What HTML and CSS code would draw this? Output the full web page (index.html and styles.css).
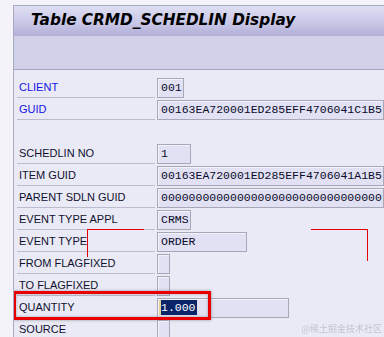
FILE: index.html
```html
<!DOCTYPE html>
<html lang="en">
<head>
    <meta charset="UTF-8">
    <meta name="viewport" content="width=device-width, initial-scale=1.0">
    <link rel="stylesheet" href="styles.css">
    <title>Table CRMD_SCHEDLIN Display</title>
</head>
<body>
    <div class="frame">
        <div class="title-bar">
            <h1>Table CRMD_SCHEDLIN Display</h1>
        </div>
        <div class="toolbar"></div>
        <div class="content">
            <div class="row key">
                <span class="label">CLIENT</span>
                <span class="field w-client">001</span>
            </div>
            <div class="row key">
                <span class="label">GUID</span>
                <span class="field w-wide">00163EA720001ED285EFF4706041C1B5</span>
            </div>
            <div class="row blank"></div>
            <div class="row">
                <span class="label">SCHEDLIN NO</span>
                <span class="field w-short">1</span>
            </div>
            <div class="row">
                <span class="label">ITEM GUID</span>
                <span class="field w-wide">00163EA720001ED285EFF4706041A1B5</span>
            </div>
            <div class="row">
                <span class="label">PARENT SDLN GUID</span>
                <span class="field w-wide">00000000000000000000000000000000</span>
            </div>
            <div class="row">
                <span class="label">EVENT TYPE APPL</span>
                <span class="field w-short">CRMS</span>
            </div>
            <div class="row">
                <span class="label">EVENT TYPE</span>
                <span class="field w-order">ORDER</span>
            </div>
            <div class="row">
                <span class="label">FROM FLAGFIXED</span>
                <span class="field w-flag"></span>
            </div>
            <div class="row">
                <span class="label">TO FLAGFIXED</span>
                <span class="field w-flag"></span>
            </div>
            <div class="row">
                <span class="label">QUANTITY</span>
                <span class="field w-qty"><span class="sel">1.000</span></span>
                <span class="frame-mark"></span>
            </div>
            <div class="row">
                <span class="label">SOURCE</span>
                <span class="field w-flag"></span>
            </div>

            <!-- hand drawn red markers on the screenshot -->
            <span class="note note-left"></span>
            <span class="note note-right"></span>
        </div>
    </div>
    <div class="watermark">@稀土掘金技术社区</div>
</body>
</html>
```

FILE: styles.css
```css
body {
    margin: 0px;
    padding: 0px;
    height: 337px;
    overflow: hidden;
    background-color: #f3f3f9;
    font-family: "Liberation Sans", Arial, sans-serif;
}

.frame {
    height: 331px;
    margin: 5px 0 0 13px;
    overflow: hidden;
    border-left: 1px solid #a9a9c2;
    border-top: 1px solid #a9a9c2;
}

.title-bar {
    height: 30px;
    padding-left: 17px;
    background: linear-gradient(to bottom, #dedef2, #c8c6e6 60%, #b2aed8);
}

.title-bar h1 {
    margin: 0;
    font-family: "DejaVu Sans", Verdana, sans-serif;
    font-size: 15.3px;
    font-weight: bold;
    font-style: italic;
    line-height: 29px;
    color: #000000;
}

.toolbar {
    height: 33px;
    background-color: #d1d1ea;
    border-bottom: 1px solid #a6a6be;
}

.content {
    position: relative;
    height: 267px;
    padding: 7px 0 0 3px;
    overflow: hidden;
    background-color: #eaeaf6;
}

.row {
    position: relative;
    display: flex;
    align-items: flex-start;
    height: 22px;
}

.label {
    box-sizing: border-box;
    flex-shrink: 0;
    width: 138px;
    height: 21px;
    padding-left: 2px;
    line-height: 20px;
    font-size: 11px;
    color: #10102e;
    border-bottom: 1px solid #bcbccc;
    white-space: nowrap;
}

.row.key .label {
    color: #1515e8;
}

.field {
    box-sizing: border-box;
    flex-shrink: 0;
    height: 20px;
    margin: 1px 0 0 2px;
    padding: 0 3px;
    font-family: "Liberation Mono", "Courier New", monospace;
    font-size: 11.5px;
    line-height: 18px;
    color: #0a0a2a;
    white-space: nowrap;
    overflow: hidden;
    background-color: #e1e1f3;
    border: 1px solid #a7a7b8;
    box-shadow: inset 1px 1px 0 #f3f3fb;
}

.w-client { width: 27px; }
.w-short { width: 34px; }
.w-order { width: 90px; }
.w-flag { width: 13px; }
.w-qty { width: 132px; padding-left: 1px; }
.w-wide { width: 240px; flex-shrink: 1; }

.sel {
    display: inline-block;
    padding-right: 1px;
    line-height: 15px;
    background-color: #0a246a;
    color: #ffffff;
    border-left: 2px solid #e4d594;
}

.frame-mark {
    position: absolute;
    top: -6px;
    left: -4px;
    box-sizing: border-box;
    width: 198px;
    height: 29px;
    border: 3px solid #e80000;
    box-shadow: 0 0 3px rgba(0, 0, 0, 0.35), inset 0 0 3px rgba(0, 0, 0, 0.3);
}

.note {
    position: absolute;
    top: 159px;
    border-top: 1px solid #e60000;
}

.note-left {
    left: 73px;
    width: 56px;
    height: 27px;
    border-left: 1px solid #e60000;
}

.note-right {
    left: 297px;
    width: 56px;
    height: 31px;
    border-right: 1px solid #e60000;
}

.watermark {
    position: fixed;
    right: 2px;
    bottom: 2px;
    font-family: "Noto Sans CJK SC", sans-serif;
    font-size: 9px;
    color: #c4c4d0;
}
```
